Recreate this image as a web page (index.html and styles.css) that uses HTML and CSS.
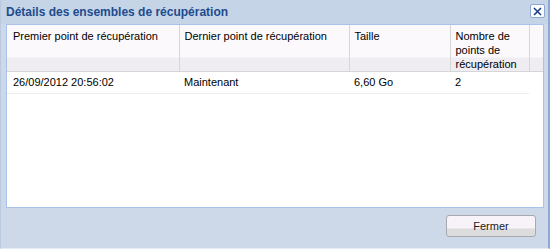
FILE: index.html
```html
<!DOCTYPE html>
<html lang="fr">
<head>
<meta charset="utf-8">
<title>Détails des ensembles de récupération</title>
<link rel="stylesheet" href="styles.css">
</head>
<body>
<div class="window">
  <div class="titlebar">
    <span class="title">Détails des ensembles de récupération</span>
    <button class="close" aria-label="Fermer">
      <svg width="9" height="9" viewBox="0 0 9 9"><path d="M1 1L8 8M8 1L1 8" stroke="#1f3f8a" stroke-width="1.6" fill="none"/></svg>
    </button>
  </div>
  <div class="panel">
    <table class="grid">
      <colgroup>
        <col class="c1"><col class="c2"><col class="c3"><col class="c4"><col class="c5">
      </colgroup>
      <thead>
        <tr>
          <th>Premier point de récupération</th>
          <th>Dernier point de récupération</th>
          <th>Taille</th>
          <th>Nombre de points de récupération</th>
          <th class="filler"></th>
        </tr>
      </thead>
      <tbody>
        <tr>
          <td>26/09/2012 20:56:02</td>
          <td>Maintenant</td>
          <td>6,60 Go</td>
          <td>2</td>
          <td class="empty"></td>
        </tr>
      </tbody>
    </table>
  </div>
  <div class="footer">
    <button class="btn">Fermer</button>
  </div>
</div>
</body>
</html>
```
FILE: styles.css
```css
html, body {
  margin: 0;
  padding: 0;
  background: #cfd9e8;
}
.window {
  width: 550px;
  height: 249px;
  box-sizing: border-box;
  background: #cdd8e8;
  border-left: 1px solid #b9c9df;
  border-right: 2px solid #8ea8d0;
  border-bottom: 1px solid #e6ecf4;
  display: flex;
  flex-direction: column;
  font-family: "Liberation Sans", Arial, sans-serif;
  font-size: 11px;
  color: #000;
}
.titlebar {
  height: 24px;
  flex: none;
  display: flex;
  align-items: center;
  justify-content: space-between;
  padding: 0 3px 0 5px;
  background: #c5d5e7;
}
.title {
  font-weight: bold;
  font-size: 12px;
  color: #1d4b8e;
  margin-top: -1px;
}
.close {
  width: 15px;
  height: 14px;
  padding: 0;
  margin: 0;
  border: 1px solid #8fa8d2;
  border-radius: 2px;
  background: #fbfcfe;
  display: flex;
  align-items: center;
  justify-content: center;
  margin-top: -2px;
}
.panel {
  flex: none;
  height: 184px;
  margin: 0 4px 0 5px;
  box-sizing: border-box;
  border: 1px solid #a8c2ea;
  background: #fff;
}
.grid {
  border-collapse: collapse;
  table-layout: fixed;
  width: 536px;
}
.c1 { width: 172px; }
.c2 { width: 170px; }
.c3 { width: 101px; }
.c4 { width: 79px; }
.c5 { width: 14px; }
.grid th {
  height: 46px;
  box-sizing: border-box;
  padding: 4px 5px 0 5px;
  vertical-align: top;
  text-align: left;
  font-weight: normal;
  line-height: 14px;
  border-right: 1px solid #d6d6d6;
  border-bottom: 1px solid #d6d6d6;
  background: linear-gradient(#fcf9fc 0, #fcf9fc 32px, #efedf2 33px, #efedf2 100%);
}
.grid th:first-child { padding-left: 6px; }
.grid th.filler { border-right: none; }
.grid td {
  height: 22px;
  box-sizing: border-box;
  padding: 3px 5px 0 5px;
  vertical-align: top;
  line-height: 14px;
  border-bottom: 1px solid #ececec;
}
.grid td:first-child { padding-left: 6px; }
.grid td.empty { border-bottom: none; }
.footer {
  flex: 1;
  display: flex;
  justify-content: flex-end;
  align-items: flex-start;
  padding: 7px 12px 0 0;
}
.btn {
  width: 90px;
  height: 22px;
  padding: 0;
  border: 1px solid #a9a9ad;
  border-radius: 3px;
  background: linear-gradient(#f8f3f8 0, #f8f3f8 12px, #dcdcdc 13px, #dcdcdc 100%);
  font-family: "Liberation Sans", Arial, sans-serif;
  font-size: 11px;
  color: #1a1a1a;
}
```
